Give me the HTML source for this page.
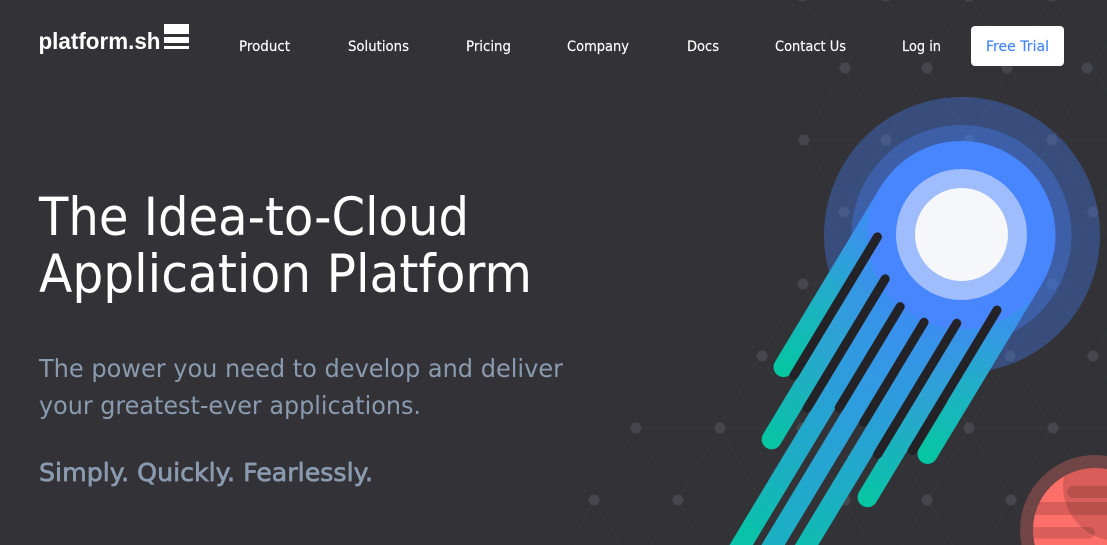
<!DOCTYPE html>
<html lang="en">
<head>
<meta charset="utf-8">
<title>Platform.sh</title>
<style>
html,body{margin:0;padding:0;background:#333237;width:1107px;height:545px;overflow:hidden}
svg{display:block}
text{font-family:"DejaVu Sans","Liberation Sans",sans-serif}
</style>
</head>
<body>
<svg width="1107" height="545" viewBox="0 0 1107 545" xmlns="http://www.w3.org/2000/svg">
<defs>
<polygon id="h" points="-6,0 -3,-5.2 3,-5.2 6,0 3,5.2 -3,5.2" fill="#47464c"/>
<linearGradient id="g7" gradientUnits="userSpaceOnUse" x1="0" y1="0" x2="0" y2="214">
<stop offset="0" stop-color="#4786ff"/><stop offset=".6" stop-color="#1fb0c5"/><stop offset="1" stop-color="#03c7a0"/>
</linearGradient>
<linearGradient id="g6" gradientUnits="userSpaceOnUse" x1="0" y1="0" x2="0" y2="282">
<stop offset="0" stop-color="#4786ff"/><stop offset=".6" stop-color="#2aa5d0"/><stop offset="1" stop-color="#04c6a1"/>
</linearGradient>
<linearGradient id="g3" gradientUnits="userSpaceOnUse" x1="0" y1="0" x2="0" y2="370">
<stop offset="0" stop-color="#4786ff"/><stop offset=".54" stop-color="#2a9fd8"/><stop offset=".8" stop-color="#1ab0c0"/><stop offset="1" stop-color="#08c3a8"/>
</linearGradient>
<linearGradient id="g4" gradientUnits="userSpaceOnUse" x1="0" y1="0" x2="0" y2="450">
<stop offset="0" stop-color="#4786ff"/><stop offset=".45" stop-color="#2d9ddd"/><stop offset=".8" stop-color="#1ab0c2"/><stop offset="1" stop-color="#08c3a8"/>
</linearGradient>
<clipPath id="pc"><circle cx="1095" cy="530" r="62"/></clipPath>
</defs>

<rect width="1107" height="545" fill="#333237"/>

<!-- network -->
<path fill="none" stroke="#35393d" stroke-width="1" d="
M804 140H1107 M803 284H1075 M636 428H1107
M886 -4L804 140 M969 -4L636 572 M1052 -4L719 572 M1135 -4L802 572 M1135 140L886 572 M1135 284L969 572 M1135 428L1052 572 M636 428L553 572
M802 -4L1135 572 M886 -4L1135 428 M969 -4L1135 284 M1052 -4L1135 140 M804 140L1052 572 M803 284L969 572 M762 356L886 572 M720 428L802 572 M636 428L719 572 M594 500L636 572"/>
<use href="#h" x="802" y="-4"/><use href="#h" x="886" y="-4"/><use href="#h" x="969" y="-4"/><use href="#h" x="1052" y="-4"/>
<use href="#h" x="845" y="68"/><use href="#h" x="927" y="68"/><use href="#h" x="1007" y="68"/><use href="#h" x="1087" y="68"/>
<use href="#h" x="804" y="140"/><use href="#h" x="886" y="140"/><use href="#h" x="969" y="140"/><use href="#h" x="1052" y="140"/>
<use href="#h" x="844" y="212"/><use href="#h" x="1093" y="212"/>
<use href="#h" x="803" y="284"/><use href="#h" x="1052" y="284"/>
<use href="#h" x="762" y="356"/><use href="#h" x="1010" y="356"/><use href="#h" x="1093" y="356"/>
<use href="#h" x="636" y="428"/><use href="#h" x="720" y="428"/><use href="#h" x="802" y="428"/><use href="#h" x="969" y="428"/><use href="#h" x="1053" y="428"/>
<use href="#h" x="594" y="500"/><use href="#h" x="678" y="500"/><use href="#h" x="845" y="500"/><use href="#h" x="927" y="500"/><use href="#h" x="1011" y="500"/>

<!-- halo rings -->
<circle cx="962" cy="235" r="138" fill="#4786ff" fill-opacity=".3"/>
<circle cx="961.5" cy="235" r="110" fill="#4786ff" fill-opacity=".3"/>

<!-- comet tail -->
<g transform="translate(961.5 235) rotate(31.1)">
<rect x="-94" y="0" width="188" height="150" fill="url(#g4)"/>
<g fill="none" stroke-width="20">
<path d="M-84.2 0V205" stroke="url(#g7)" stroke-linecap="round"/>
<path d="M-57 0V273" stroke="url(#g6)" stroke-linecap="round"/>
<path d="M-28.5 0V420" stroke="url(#g3)"/>
<path d="M-1.2 0V420" stroke="url(#g4)"/>
<path d="M27.5 0V420" stroke="url(#g3)"/>
<path d="M55 0V273" stroke="url(#g6)" stroke-linecap="round"/>
<path d="M84 0V205" stroke="url(#g7)" stroke-linecap="round"/>
</g>
</g>
<circle cx="961.5" cy="235" r="110" fill="#4786ff" fill-opacity=".07"/>
<circle cx="962" cy="235" r="138" fill="#4786ff" fill-opacity=".06"/>
<circle cx="961.5" cy="235" r="94" fill="#4786ff"/>
<g transform="translate(961.5 235) rotate(31.1)" fill="none" stroke="#232227" stroke-width="9" stroke-linecap="round">
<path d="M-71 45V207"/>
<path d="M-42.7 77V228"/>
<path d="M-15.5 93V211"/>
<path d="M13 94V211"/>
<path d="M41.5 78V231"/>
<path d="M69.2 46V210"/>
</g>
<circle cx="961.5" cy="234.5" r="65.5" fill="#9fbdfd"/>
<circle cx="961.5" cy="234.5" r="46.5" fill="#f5f7fb"/>

<!-- planet -->
<circle cx="1095" cy="530" r="75" fill="#6f4546"/>
<circle cx="1095" cy="530" r="62" fill="#ff6f69"/>
<g clip-path="url(#pc)" fill="#000" fill-opacity=".15">
<circle cx="1118" cy="486" r="55"/>
<rect x="1020" y="502" width="100" height="13"/>
<rect x="1067" y="486" width="60" height="12" rx="6"/>
<rect x="1020" y="527" width="75" height="11.5" rx="5.7"/>
</g>

<!-- logo -->
<text x="38.5" y="49" font-size="23" font-weight="700" fill="#fff" textLength="122" lengthAdjust="spacingAndGlyphs" style="font-family:'Liberation Sans',sans-serif">platform.sh</text>
<rect x="164" y="24" width="25" height="10" fill="#fff"/>
<rect x="164" y="37" width="25" height="6" fill="#fff"/>
<rect x="164" y="46" width="25" height="3" fill="#fff"/>

<!-- nav -->
<g font-size="14" fill="#fff" stroke="#fff" stroke-width=".15">
<text x="239" y="51" textLength="51" lengthAdjust="spacingAndGlyphs">Product</text>
<text x="348" y="51" textLength="61" lengthAdjust="spacingAndGlyphs">Solutions</text>
<text x="466" y="51" textLength="45" lengthAdjust="spacingAndGlyphs">Pricing</text>
<text x="567" y="51" textLength="62" lengthAdjust="spacingAndGlyphs">Company</text>
<text x="687" y="51" textLength="32" lengthAdjust="spacingAndGlyphs">Docs</text>
<text x="775" y="51" textLength="71" lengthAdjust="spacingAndGlyphs">Contact Us</text>
<text x="902" y="51" textLength="39" lengthAdjust="spacingAndGlyphs">Log in</text>
</g>
<rect x="971" y="26" width="93" height="40" rx="4" fill="#fff"/>
<text x="986" y="51" font-size="14" fill="#4786ff" stroke="#4786ff" stroke-width=".15" textLength="63" lengthAdjust="spacingAndGlyphs">Free Trial</text>

<!-- hero text -->
<g font-size="52.5" fill="#fff">
<text x="39" y="235" textLength="430" lengthAdjust="spacingAndGlyphs">The Idea-to-Cloud</text>
<text x="39" y="292" textLength="493" lengthAdjust="spacingAndGlyphs">Application Platform</text>
</g>
<g font-size="25" fill="#8a9bb0">
<text x="39" y="377" textLength="524" lengthAdjust="spacingAndGlyphs">The power you need to develop and deliver</text>
<text x="39" y="414" textLength="382" lengthAdjust="spacingAndGlyphs">your greatest-ever applications.</text>
<text x="39" y="481" stroke="#8a9bb0" stroke-width=".7" textLength="334" lengthAdjust="spacingAndGlyphs">Simply. Quickly. Fearlessly.</text>
</g>
</svg>
</body>
</html>
